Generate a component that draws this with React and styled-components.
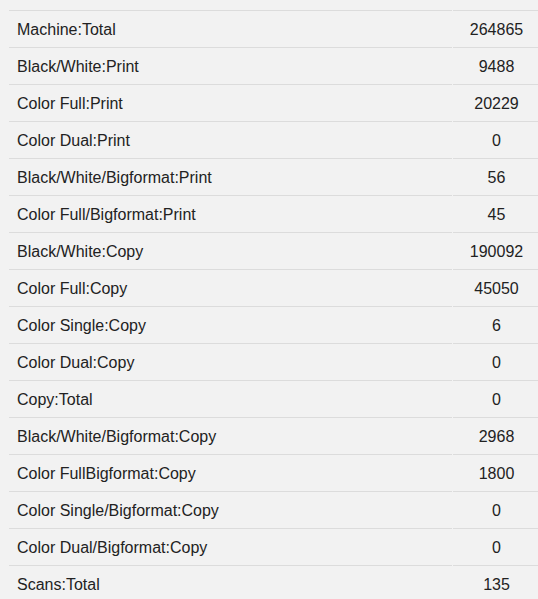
import React from 'react';
import styled, { createGlobalStyle } from 'styled-components';

const GlobalStyle = createGlobalStyle`
  html, body {
    margin: 0;
    padding: 0;
    background: #f2f2f2;
    overflow: hidden;
  }
`;

const Page = styled.div`
  padding: 10px 0 0 9px;
  font-family: "Liberation Sans", Arial, sans-serif;
  font-size: 16px;
  color: #222;
`;

const Table = styled.div`
  display: grid;
  grid-template-columns: 443px 87px;
  column-gap: 1px;
`;

const Cell = styled.div`
  height: 36px;
  box-sizing: border-box;
  height: 37px;
  padding-top: 2px;
  border-top: 1px solid #dcdcdc;
  display: flex;
  align-items: center;
  justify-content: ${p => (p.$num ? 'center' : 'flex-start')};
  padding-left: ${p => (p.$num ? '0' : '8px')};
  line-height: 1;
`;

const rows = [
  ['Machine:Total', '264865'],
  ['Black/White:Print', '9488'],
  ['Color Full:Print', '20229'],
  ['Color Dual:Print', '0'],
  ['Black/White/Bigformat:Print', '56'],
  ['Color Full/Bigformat:Print', '45'],
  ['Black/White:Copy', '190092'],
  ['Color Full:Copy', '45050'],
  ['Color Single:Copy', '6'],
  ['Color Dual:Copy', '0'],
  ['Copy:Total', '0'],
  ['Black/White/Bigformat:Copy', '2968'],
  ['Color FullBigformat:Copy', '1800'],
  ['Color Single/Bigformat:Copy', '0'],
  ['Color Dual/Bigformat:Copy', '0'],
  ['Scans:Total', '135'],
];

export default function App() {
  return (
    <>
      <GlobalStyle />
      <Page>
        <Table>
          {rows.map(([label, value]) => (
            <React.Fragment key={label}>
              <Cell>{label}</Cell>
              <Cell $num>{value}</Cell>
            </React.Fragment>
          ))}
        </Table>
      </Page>
    </>
  );
}
